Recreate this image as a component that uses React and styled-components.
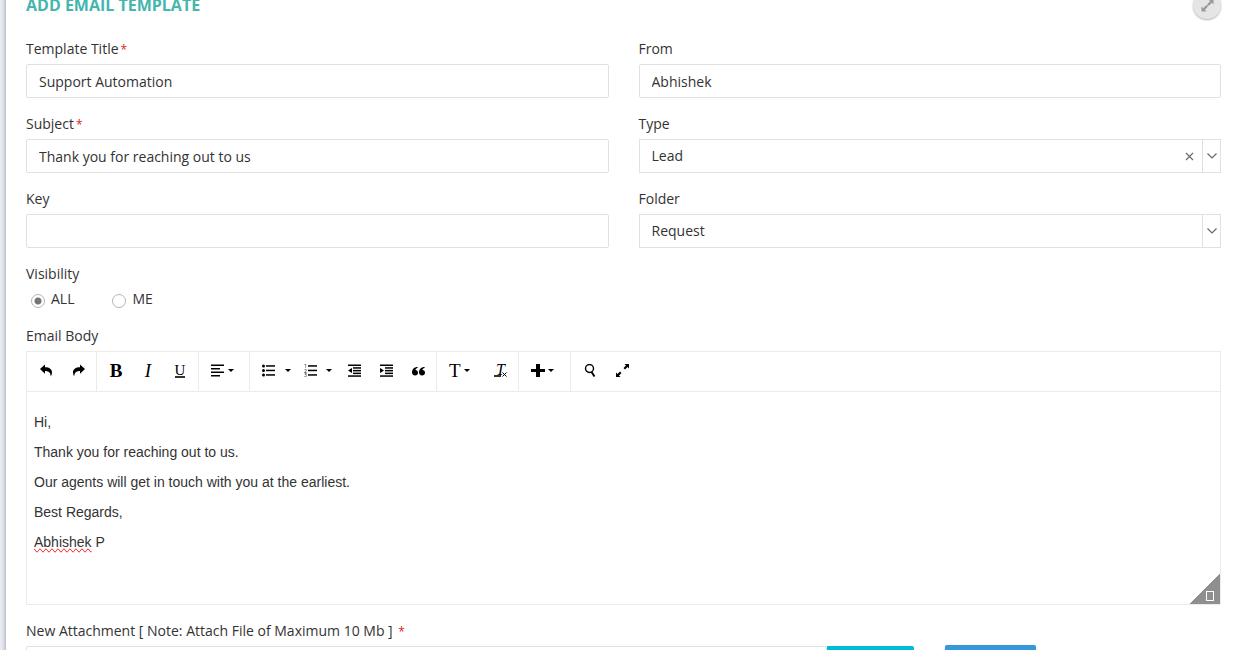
import React, { useState } from 'react';
import styled, { createGlobalStyle } from 'styled-components';

const GlobalStyle = createGlobalStyle`
    * {
        box-sizing: border-box;
    }
    body {
        margin: 0;
        height: 100vh;
        overflow: hidden;
        background: #e9ecf3;
        color: #333;
        font-family: 'Open Sans', sans-serif;
        font-size: 14px;
        line-height: 20px;
    }
    button, input, select {
        font: inherit;
        color: inherit;
    }
`;

const toolbarGroups = [
    [{ id: 'undo', label: 'Undo' }, { id: 'redo', label: 'Redo' }],
    [{ id: 'bold', label: 'Bold' }, { id: 'italic', label: 'Italic' }, { id: 'underline', label: 'Underline' }],
    [{ id: 'align', label: 'Align', caret: true, gap: 4, width: 45 }],
    [
        { id: 'bullets', label: 'Bullet list', caret: true, gap: 10, width: 42 },
        { id: 'numbers', label: 'Numbered list', caret: true, gap: 9, width: 43 },
        { id: 'outdent', label: 'Decrease indent' },
        { id: 'indent', label: 'Increase indent' },
        { id: 'quote', label: 'Quote' },
    ],
    [{ id: 'text', label: 'Text style', caret: true, gap: 3, width: 44 }, { id: 'clear', label: 'Clear formatting' }],
    [{ id: 'insert', label: 'Insert', caret: true, gap: 3, width: 46 }],
    [{ id: 'search', label: 'Find' }, { id: 'expand', label: 'Fullscreen' }],
];

const bars = (lines) => lines.map(([x, y, w]) => <rect key={y} x={x} y={y} width={w} height="1.5" />);

const icons = {
    undo: <path d="M0 5 5 .5v2.700c4.500 0 7 2 7 5.300 0 1.500-.4 2.800-1.200 4C10.600 9 9.200 7.100 5 7v2.700z" />,
    redo: <path d="M13 5 8 .5v2.700C3.500 3.200 1 5.200 1 8.500c0 1.500.4 2.800 1.200 4C2.400 9 3.800 7.100 8 7v2.700z" />,
    align: bars([[0, 0.500, 13], [0, 4, 9], [0, 7.500, 13], [0, 11, 9]]),
    bullets: (
        <>
            <circle cx="1.500" cy="2" r="1.500" />
            <circle cx="1.500" cy="6.500" r="1.500" />
            <circle cx="1.500" cy="11" r="1.500" />
            {bars([[4, 1.200, 9], [4, 5.700, 9], [4, 10.200, 9]])}
        </>
    ),
    numbers: (
        <>
            <text x="0" y="4" fontSize="5">1</text>
            <text x="0" y="9" fontSize="5">2</text>
            <text x="0" y="13" fontSize="5">3</text>
            {bars([[4, 1.200, 9], [4, 5.700, 9], [4, 10.200, 9]])}
        </>
    ),
    outdent: <>{bars([[0, 0.500, 13], [5, 3.200, 8], [5, 5.900, 8], [5, 8.600, 8], [0, 11.300, 13]])}<path d="M0 6.600 4 4v5z" /></>,
    indent: <>{bars([[0, 0.500, 13], [5, 3.200, 8], [5, 5.900, 8], [5, 8.600, 8], [0, 11.300, 13]])}<path d="M4 6.600 0 4v5z" /></>,
    quote: (
        <>
            <path d="M5.600 3C2.200 3 0 5.200 0 8.300 0 10.200 1.200 11.500 3 11.500S6 10.300 6 8.700 4.900 6 3.500 6C3.500 5 4.300 4.200 5.600 4z" />
            <path d="M12.600 3C9.200 3 7 5.200 7 8.300c0 1.900 1.200 3.200 3 3.200s3-1.200 3-2.800S11.900 6 10.500 6c0-1 .8-1.800 2.100-2z" />
        </>
    ),
    insert: <path d="M5 0h4v5h5v3H9v5H5V8H0V5h5z" />,
    search: (
        <g fill="none" stroke="#000">
            <circle cx="5.500" cy="4.500" r="4" strokeWidth="1.400" />
            <path d="M7.500 8l3 4.500" strokeWidth="1.900" />
        </g>
    ),
    expand: (
        <>
            <path d="M8.500 0H13v4.500L11.500 3 9 5.500 7.500 4 10 1.500z" />
            <path d="M4.500 13H0V8.500L1.500 10 4 7.500 5.500 9 3 11.500z" />
        </>
    ),
};

function ToolIcon({ id }) {
    if (id === 'bold') return <Letter $bold>B</Letter>;
    if (id === 'italic') return <Letter $italic>I</Letter>;
    if (id === 'underline') return <UnderLetter>U</UnderLetter>;
    if (id === 'text') return <Letter>T</Letter>;
    if (id === 'clear') {
        return (
            <ClearIcon width="13" height="13" viewBox="0 0 13 13">
                <text x="2" y="10.500" fontSize="16" fontStyle="italic">T</text>
                <rect x="0" y="11" width="7" height="2" fill="#333" />
                <path d="M8.500 8.500l4 4M12.500 8.500l-4 4" stroke="#000" />
            </ClearIcon>
        );
    }
    const width = id === 'insert' ? 14 : 13;
    return <svg width={width} height="13" viewBox={`0 0 ${width} 13`}>{icons[id]}</svg>;
}

function SelectField({ id, label, value, clearable }) {
    return (
        <Field>
            <Label htmlFor={id}>{label}</Label>
            <SelectBox>
                <Select id={id} defaultValue={value}>
                    <option>{value}</option>
                </Select>
                {clearable && (
                    <ClearButton type="button" aria-label="Clear type">
                        <svg width="9" height="9" viewBox="0 0 9 9" fill="none" stroke="#666" strokeWidth="1.100">
                            <path d="M1 1l7 7M8 1L1 8" />
                        </svg>
                    </ClearButton>
                )}
                <Arrow>
                    <svg width="10" height="6" viewBox="0 0 10 6" fill="none" stroke="#666" strokeWidth="1.200">
                        <path d="M.5.5L5 5 9.500.5" />
                    </svg>
                </Arrow>
            </SelectBox>
        </Field>
    );
}

function TextField({ id, label, value, required }) {
    return (
        <Field>
            <Label htmlFor={id}>{label}{required && <Star>*</Star>}</Label>
            <Input id={id} type="text" defaultValue={value} />
        </Field>
    );
}

export default function App() {
    const [visibility, setVisibility] = useState('ALL');

    return (
        <>
            <GlobalStyle />
            <Panel>
                <Header>
                    <Title>ADD EMAIL TEMPLATE</Title>
                    <RoundButton type="button" aria-label="Fullscreen">
                        <svg width="13" height="13" viewBox="0 0 13 13" fill="#999">
                            <path d="M7.500.5h5v5l-1.700-1.700-2.600 2.600-1.600-1.600 2.600-2.600z" />
                            <path d="M5.500 12.500h-5v-5l1.700 1.700 2.600-2.600 1.600 1.600-2.600 2.600z" />
                            <path d="M5 8l3-3" stroke="#999" strokeWidth="1.500" />
                        </svg>
                    </RoundButton>
                </Header>
                <form>
                    <Columns>
                        <TextField id="title" label="Template Title" value="Support Automation" required />
                        <TextField id="from" label="From" value="Abhishek" />
                        <TextField id="subject" label="Subject" value="Thank you for reaching out to us" required />
                        <SelectField id="type" label="Type" value="Lead" clearable />
                        <TextField id="key" label="Key" value="" />
                        <SelectField id="folder" label="Folder" value="Request" />
                    </Columns>
                    <RadioSet>
                        <Legend>Visibility</Legend>
                        <RadioRow>
                            {['ALL', 'ME'].map((name) => (
                                <RadioLabel key={name}>
                                    <Radio
                                        type="radio"
                                        name="visibility"
                                        checked={visibility === name}
                                        onChange={() => setVisibility(name)}
                                    />
                                    {name}
                                </RadioLabel>
                            ))}
                        </RadioRow>
                    </RadioSet>
                    <Label as="div" id="body-label">Email Body</Label>
                    <Editor>
                        <Toolbar role="toolbar">
                            {toolbarGroups.map((group) => (
                                <ToolGroup key={group[0].id}>
                                    {group.map(({ id, label, caret, gap, width }) => (
                                        <ToolButton key={id} type="button" aria-label={label} $caret={caret} $gap={gap} $width={width}>
                                            <ToolIcon id={id} />
                                            {caret && <Caret />}
                                        </ToolButton>
                                    ))}
                                </ToolGroup>
                            ))}
                        </Toolbar>
                        <Content
                            role="textbox"
                            aria-labelledby="body-label"
                            contentEditable
                            suppressContentEditableWarning
                            spellCheck={false}
                        >
                            <p>Hi,</p>
                            <p>Thank you for reaching out to us.</p>
                            <p>Our agents will get in touch with you at the earliest.</p>
                            <p>Best Regards,</p>
                            <p><Misspelt>Abhishek</Misspelt> P</p>
                        </Content>
                        <Corner><CornerMark /></Corner>
                    </Editor>
                    <Label htmlFor="attachment">
                        New Attachment [ Note: Attach File of Maximum 10 Mb ] <Star>*</Star>
                    </Label>
                    <AttachRow>
                        <FileGroup>
                            <Input id="attachment" type="text" />
                            <ActionButton type="button" aria-label="Browse" $color="#00bcd4" />
                        </FileGroup>
                        <UploadButton type="button" aria-label="Upload" $color="#3598dc" />
                    </AttachRow>
                </form>
            </Panel>
        </>
    );
}

const Panel = styled.main`
    margin: -9px 0 0 6px;
    padding: 0 19px 20px 20px;
    background: #fff;
    box-shadow: 0 0 5px rgba(0, 0, 0, .4);
`;

const Header = styled.header`
    display: flex;
    justify-content: space-between;
    height: 48px;
`;

const Title = styled.h1`
    margin: 0;
    color: #44b6ae;
    font-size: 16px;
    font-weight: 700;
    line-height: 28px;
`;

const RoundButton = styled.button`
    display: flex;
    align-items: center;
    justify-content: center;
    width: 28px;
    height: 28px;
    padding: 0;
    border: 0;
    border-radius: 50%;
    background: #e5e5e5;
    box-shadow: 0 1px 2px rgba(0, 0, 0, .3);
`;

const Columns = styled.div`
    display: grid;
    grid-template-columns: 1fr 1fr;
    column-gap: 30px;
`;

const Field = styled.div`
    margin-bottom: 16px;
`;

const Label = styled.label`
    display: block;
    margin-bottom: 5px;
`;

const Star = styled.span`
    margin-left: 2px;
    color: #e02222;
    font-size: 12px;
    line-height: 1;
`;

const Input = styled.input`
    display: block;
    width: 100%;
    height: 34px;
    padding: 0 12px;
    border: 1px solid #e1e1e1;
    border-radius: 2px;
    outline: 0;
    background: #fff;
`;

const SelectBox = styled.div`
    display: flex;
    height: 34px;
    border: 1px solid #e1e1e1;
`;

const Select = styled.select`
    flex: 1;
    padding: 0 12px;
    border: 0;
    outline: 0;
    appearance: none;
    background: transparent;
`;

const ClearButton = styled.button`
    display: flex;
    align-items: center;
    justify-content: center;
    width: 25px;
    padding: 0;
    border: 0;
    background: transparent;
`;

const Arrow = styled.span`
    display: flex;
    align-items: center;
    justify-content: center;
    width: 18px;
    border-left: 1px solid #e1e1e1;
`;

const RadioSet = styled.fieldset`
    margin: 0 0 17px;
    padding: 0;
    border: 0;
`;

const Legend = styled.legend`
    padding: 0;
    margin-bottom: 5px;
`;

const RadioRow = styled.div`
    display: flex;
    gap: 38px;
    padding-left: 5px;
`;

const RadioLabel = styled.label`
    display: flex;
    align-items: center;
    gap: 6px;
`;

const Radio = styled.input`
    width: 14px;
    height: 14px;
    margin: 3px 0 0;
    border: 1px solid #b5b5b5;
    border-radius: 50%;
    appearance: none;

    &:checked {
        background: radial-gradient(circle, #757575 3px, #fff 4px);
    }
`;

const Editor = styled.section`
    position: relative;
    margin-bottom: 16px;
    border: 1px solid #ebebeb;
`;

const Toolbar = styled.div`
    display: flex;
    height: 40px;
    border-bottom: 1px solid #ebebeb;
`;

const ToolGroup = styled.div`
    display: flex;
    padding: 0 2px 0 3px;

    &:not(:last-child) {
        border-right: 1px solid #ebebeb;
    }
`;

const ToolButton = styled.button`
    display: flex;
    align-items: center;
    justify-content: ${({ $caret }) => ($caret ? 'flex-start' : 'center')};
    gap: ${({ $gap }) => $gap || 0}px;
    width: ${({ $width }) => $width || 32}px;
    height: 37px;
    padding: ${({ $caret }) => ($caret ? '0 0 0 9px' : 0)};
    border: 0;
    background: transparent;
    color: #000;

    svg {
        flex: none;
    }
`;

const Caret = styled.span`
    border: 3px solid transparent;
    border-top-color: #000;
    border-bottom: 0;
`;

const Letter = styled.span`
    font-family: 'Liberation Serif', serif;
    font-size: 19px;
    font-weight: ${({ $bold }) => ($bold ? 700 : 400)};
    font-style: ${({ $italic }) => ($italic ? 'italic' : 'normal')};
`;

const UnderLetter = styled(Letter)`
    border-bottom: 2px solid #333;
    font-size: 15px;
    line-height: 12px;
`;

const ClearIcon = styled.svg`
    font-family: 'Liberation Serif', serif;
    overflow: visible;
`;

const Content = styled.div`
    min-height: 212px;
    padding: 20px 7px 0;
    outline: 0;
    font-family: 'Liberation Sans', Arial, sans-serif;

    p {
        margin: 0 0 10px;
    }
`;

const Misspelt = styled.span`
    text-decoration: spelling-error;
`;

const Corner = styled.span`
    position: absolute;
    right: 0;
    bottom: 0;
    display: flex;
    align-items: flex-end;
    justify-content: flex-end;
    width: 30px;
    height: 30px;
    padding: 0 6px 3px 0;
    background: linear-gradient(135deg, transparent 50%, #8f8f8f 50%);
`;

const CornerMark = styled.span`
    width: 8px;
    height: 10px;
    border: 1px solid #fff;
`;

const AttachRow = styled.div`
    display: grid;
    grid-template-columns: calc(75% - 8px) auto;
    justify-content: start;
    align-items: start;
    column-gap: 31px;
`;

const FileGroup = styled.div`
    display: flex;
`;

const ActionButton = styled.button`
    flex: none;
    width: 87px;
    height: 34px;
    border: 0;
    border-radius: 0 2px 2px 0;
    background: ${({ $color }) => $color};
    color: #fff;
`;

const UploadButton = styled(ActionButton)`
    width: 91px;
    height: 36px;
    margin-top: -1px;
    border-radius: 2px;
    box-shadow: 0 1px 3px rgba(0, 0, 0, .2);
`;
